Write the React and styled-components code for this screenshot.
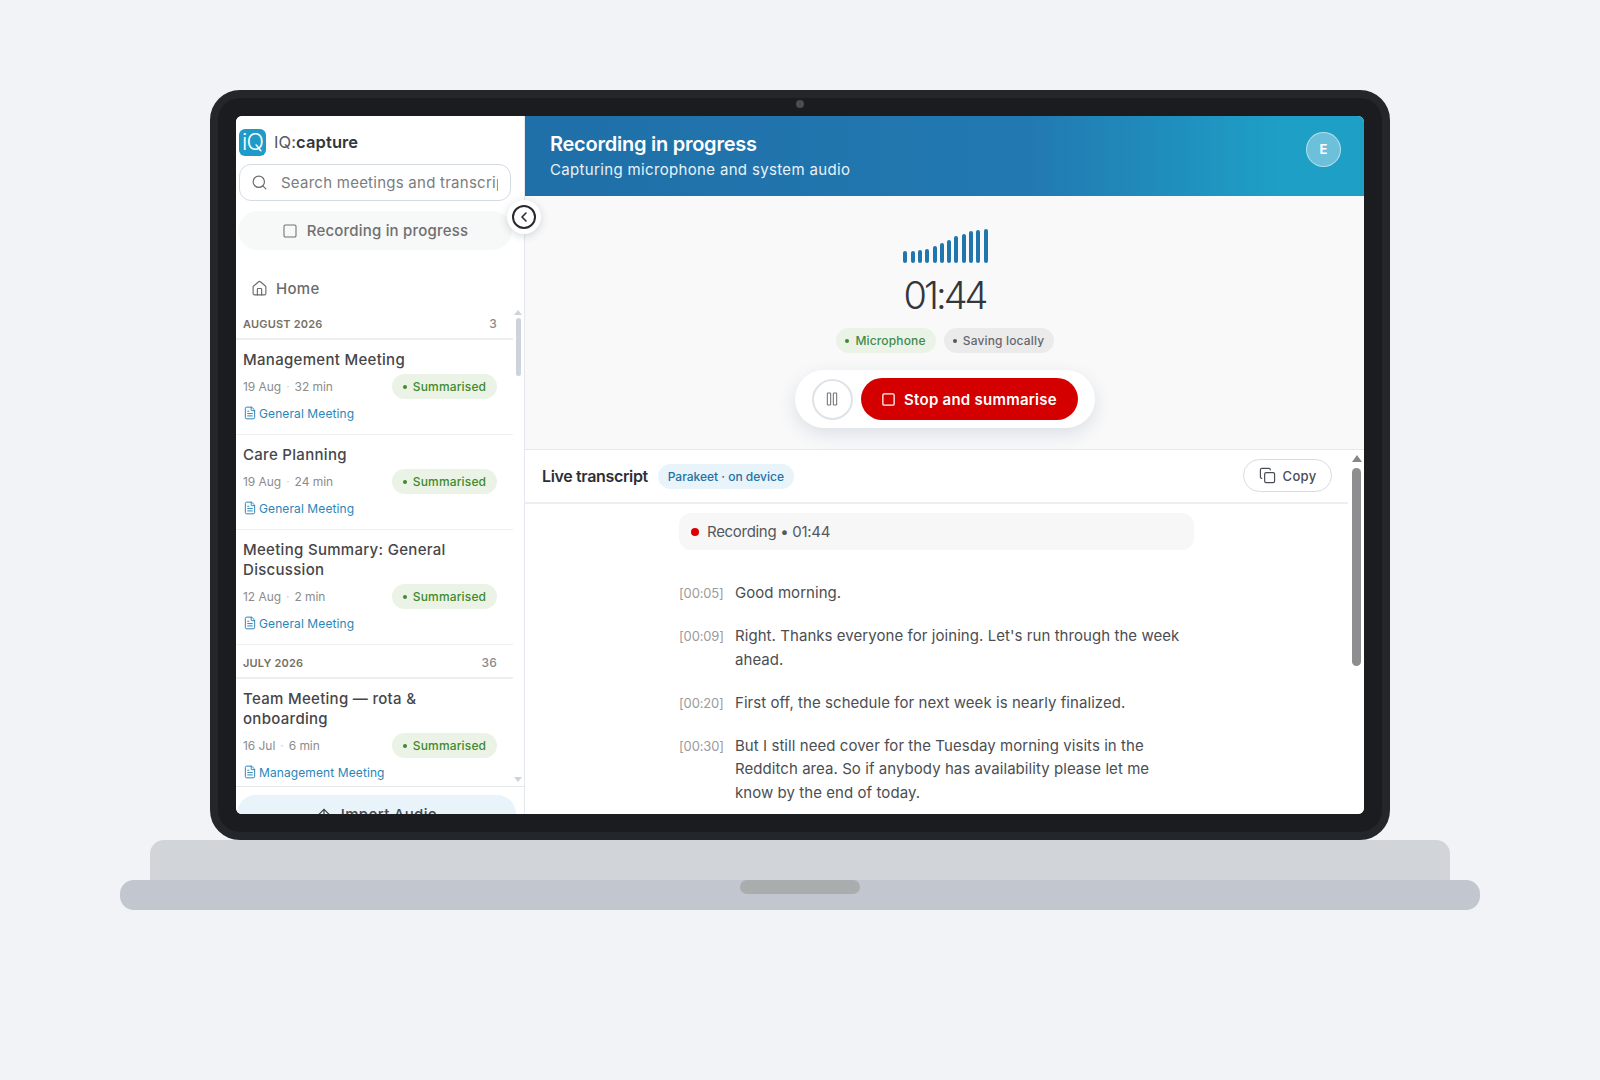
import React from 'react';
import styled, { createGlobalStyle } from 'styled-components';
import { Search, Square, House, FileText, ArrowUp, ChevronLeft, Copy, Pause } from 'lucide-react';

const Global = createGlobalStyle`
  html, body { margin: 0; padding: 0; background: #f1f3f7; }
  * { box-sizing: border-box; }
  body { font-family: Inter, "Noto Sans", sans-serif; }
`;

const Page = styled.div`
  width: 1600px; height: 1080px; padding-top: 90px; overflow: hidden;
  display: flex; flex-direction: column; align-items: center;
`;
const Lid = styled.div`
  position: relative; width: 1180px; height: 750px; padding: 18px;
  background: #1a1c20; border: 8px solid #23272c; border-radius: 30px;
`;
const Camera = styled.div`
  position: absolute; top: 2px; left: 50%; margin-left: -4px; width: 8px; height: 8px;
  border-radius: 50%; background: #4a4d52;
`;
const Screen = styled.div`
  position: relative; width: 1128px; height: 698px; display: flex; background: #fff;
  border-radius: 6px; overflow: hidden;
`;
const Hinge = styled.div`
  width: 1300px; height: 40px; background: #d1d5d9; border-radius: 14px 14px 0 0;
`;
const Base = styled.div`
  width: 1360px; height: 30px; background: #c2c6ce; border-radius: 14px;
  display: flex; justify-content: center;
`;
const Notch = styled.div`
  width: 120px; height: 14px; background: #a9adad; border-radius: 8px;
`;

const Sidebar = styled.aside`
  width: 289px; height: 698px; flex: none; display: flex; flex-direction: column;
  border-right: 1px solid #e4e8ec; overflow: hidden; background: #fff;
`;
const Brand = styled.div`
  height: 48px; flex: none; padding: 13px 0 0 3px; display: flex; align-items: flex-start; gap: 8px;
`;
const Logo = styled.div`
  width: 27px; height: 27px; border-radius: 6px; background: #1f9bc8; color: #fff;
  font-size: 23px; font-weight: 300; line-height: 26px; text-align: center; letter-spacing: -1px;
`;
const BrandName = styled.div`
  font-size: 16.5px; line-height: 27px; color: #55585c; font-weight: 400; letter-spacing: 0.1px;
  b { font-weight: 600; color: #33363a; }
`;
const SearchBox = styled.div`
  margin-left: 3px; width: 272px; height: 37px; flex: none; border: 1px solid #d4dae2; border-radius: 12px;
  display: flex; align-items: center; padding-left: 11px; gap: 13px; overflow: hidden;
  color: #6a6d70;
`;
const SearchText = styled.div`
  font-size: 15px; color: #7a7d80; white-space: nowrap; overflow: hidden; width: 217px; letter-spacing: 0.25px;
`;
const RecordingButton = styled.div`
  margin: 10px 0 0 2px; width: 274px; height: 39px; flex: none; border-radius: 20px; background: #f7f8f8;
  display: flex; align-items: center; justify-content: center; gap: 9px; color: #707070;
  font-size: 15px; font-weight: 500; letter-spacing: 0.2px;
`;
const HomeRow = styled.div`
  margin-top: 20px; height: 36px; flex: none; padding-left: 15px; display: flex; align-items: center; gap: 8px;
  font-size: 15px; font-weight: 500; color: #6b6b6b; letter-spacing: 0.3px;
`;
const ListArea = styled.div`
  height: 480px; flex: none; display: flex;
`;
const List = styled.div`
  width: 277px; height: 480px; overflow: hidden; flex: none;
`;
const MiniScroll = styled.div`
  margin-left: 3px; width: 4px; height: 480px; display: flex; flex-direction: column; align-items: center;
  justify-content: space-between; padding: 4px 0;
`;
const Track = styled.div`
  flex: 1; width: 100%; margin-top: 3px;
`;
const MiniThumb = styled.div`
  width: 5px; height: 58px; border-radius: 3px; background: #ccd3db;
`;
const Arrow = styled.div`
  width: 0; height: 0; border-left: ${p => p.$s || 4}px solid transparent; border-right: ${p => p.$s || 4}px solid transparent;
  ${p => p.$down ? `border-top: 5px solid ${p.$c};` : `border-bottom: ${p.$s ? p.$s + 2 : 5}px solid ${p.$c};`}
`;
const SectionHead = styled.div`
  height: 34px; padding: 9px 16px 0 7px; display: flex; justify-content: space-between; align-items: flex-start;
  border-bottom: 2px solid #eeeeee; font-size: 11px; line-height: 18px; font-weight: 600; color: #777063;
  letter-spacing: 0.2px;
`;
const Count = styled.span`
  font-size: 12px; font-weight: 500; color: #8a8a8a; letter-spacing: 0.2px;
`;
const Item = styled.div`
  padding: 10px 16px 12px 7px; border-bottom: 1px solid ${p => p.$last ? 'transparent' : '#eeeeee'};
`;
const ItemTitle = styled.div`
  font-size: 15px; line-height: 20px; font-weight: 500; color: #46464a; letter-spacing: 0.3px;
  margin-bottom: ${p => p.$extra ? 1 : 0}px;
`;
const MetaRow = styled.div`
  margin-top: 4px; height: 25px; display: flex; align-items: center; justify-content: space-between;
`;
const Meta = styled.div`
  font-size: 12px; color: #8c8c8c; display: flex; gap: 5px; white-space: nowrap; letter-spacing: -0.05px;
  i { font-style: normal; color: #cfcfcf; }
`;
const Chip = styled.div`
  display: inline-flex; align-items: center; justify-content: center; height: 25px; border-radius: 13px;
  background: ${p => p.$bg}; color: ${p => p.$fg}; font-size: 12px; font-weight: 500; gap: 6px;
  width: ${p => p.$w}px; white-space: nowrap; letter-spacing: 0.15px;
`;
const Dot = styled.span`
  width: 4px; height: 4px; border-radius: 50%; background: ${p => p.$c}; flex: none;
`;
const LinkRow = styled.div`
  margin-top: 5px; height: 18px; display: flex; align-items: center; gap: 2px;
  font-size: 12px; color: #2a86b8; letter-spacing: 0.1px;
`;
const Footer = styled.div`
  border-top: 1px solid #e6e9ec; padding: 8px 7px 0 1px; flex: none;
`;
const ImportButton = styled.div`
  width: 279px; height: 38px; border-radius: 20px; background: #e8f3fa; color: #4a4a4e;
  display: flex; align-items: center; justify-content: center; gap: 9px; font-size: 15px; font-weight: 500;
  letter-spacing: 0.3px;
`;
const Collapse = styled.div`
  position: absolute; left: 271px; top: 84px; width: 34px; height: 34px; border-radius: 50%;
  background: #fff; box-shadow: 0 2px 8px rgba(30,50,70,.18); display: flex; align-items: center; justify-content: center;
  z-index: 2;
`;
const CollapseRing = styled.div`
  width: 24px; height: 24px; border-radius: 50%; border: 2px solid #2a2a2e; color: #2a2a2e;
  display: flex; align-items: center; justify-content: center;
`;

const Main = styled.main`
  flex: 1; min-width: 0; display: flex; flex-direction: column; height: 698px;
`;
const Banner = styled.header`
  height: 80px; flex: none; padding: 0 23px 0 25px; display: flex; align-items: center; justify-content: space-between;
  background: linear-gradient(90deg, #1f6fa8 0%, #2279b1 60%, #1e9fc6 90%, #1e9fc6 100%); color: #fff;
`;
const BannerTitle = styled.div`
  font-size: 20px; line-height: 26px; font-weight: 600; letter-spacing: -0.25px; margin-top: -1px;
`;
const BannerSub = styled.div`
  font-size: 15px; line-height: 22px; color: #e8f2f8; letter-spacing: 0.34px; margin-top: 2px;
`;
const Avatar = styled.div`
  width: 35px; height: 35px; border-radius: 50%; background: rgba(255,255,255,.35);
  border: 1px solid rgba(255,255,255,.5); display: flex; align-items: center; justify-content: center;
  font-size: 13px; font-weight: 700; margin-top: -14px;
`;
const RecorderPanel = styled.section`
  height: 254px; flex: none; background: #f9f9fa; border-bottom: 1px solid #e6e8ea;
  display: flex; flex-direction: column; align-items: center; padding: 32px 0 0 0;
`;
const Bars = styled.div`
  height: 35px; display: flex; align-items: flex-end; gap: 3.33px; flex: none; padding-left: 2px;
`;
const Bar = styled.div`
  width: 4px; height: ${p => p.$h}px; border-radius: 2px; background: #2276ae;
`;
const Timer = styled.div`
  margin-top: 8px; font-size: 38px; line-height: 48px; font-weight: 300; color: #33363a; letter-spacing: -3px;
`;
const ChipRow = styled.div`
  margin-top: 9px; display: flex; gap: 8px;
`;
const Controls = styled.div`
  margin-top: 17px; width: 300px; height: 58px; border-radius: 29px; background: #fff;
  box-shadow: 0 6px 18px rgba(40,70,100,.14); display: flex; align-items: center; padding: 0 17px; gap: 8px;
`;
const PauseButton = styled.div`
  width: 41px; height: 41px; border-radius: 50%; border: 2px solid #dde3e8; color: #707478;
  display: flex; align-items: center; justify-content: center; flex: none;
`;
const StopButton = styled.div`
  width: 218px; height: 42px; border-radius: 21px; background: #d40000; color: #fff;
  display: flex; align-items: center; justify-content: center; gap: 8px; font-size: 15px; font-weight: 600;
  letter-spacing: 0.25px;
`;
const TranscriptArea = styled.section`
  flex: 1; min-height: 0; display: flex; background: #fff;
`;
const TranscriptMain = styled.div`
  width: 823px; flex: none; display: flex; flex-direction: column;
`;
const TranscriptHead = styled.div`
  height: 54px; flex: none; border-bottom: 2px solid #eceef0; padding: 0 16px 0 17px; display: flex; align-items: center; gap: 10px;
`;
const HeadTitle = styled.div`
  font-size: 16px; font-weight: 600; color: #2c3036; white-space: nowrap; letter-spacing: -0.35px;
`;
const EngineChip = styled.div`
  height: 25px; width: 136px; border-radius: 13px; background: #e8f3fa; color: #2272a4; font-size: 12px; font-weight: 500;
  display: flex; align-items: center; justify-content: center; letter-spacing: 0; white-space: nowrap;
`;
const CopyButton = styled.div`
  margin-left: auto; margin-top: -1px; width: 89px; height: 33px; border-radius: 17px; border: 1px solid #d5dce2;
  display: flex; align-items: center; justify-content: center; gap: 7px; font-size: 13px; font-weight: 500; color: #4a4e54;
  letter-spacing: 0.3px;
`;
const TranscriptBody = styled.div`
  padding: 9px 0 0 154px; overflow: hidden; flex: 1; min-height: 0;
`;
const StatusBar = styled.div`
  width: 515px; height: 37px; border-radius: 12px; background: #f7f7f7; padding-left: 12px;
  display: flex; align-items: center; gap: 8px; font-size: 15px; color: #55585c; letter-spacing: -0.3px;
`;
const RedDot = styled.span`
  width: 8px; height: 8px; border-radius: 50%; background: #dd0000;
`;
const Lines = styled.div`
  margin-top: 31px; width: 505px; display: flex; flex-direction: column; gap: 19.5px;
`;
const Line = styled.div`
  display: grid; grid-template-columns: 56px 1fr; align-items: baseline;
`;
const Stamp = styled.span`
  font-size: 13px; color: #9b9b9b; letter-spacing: -0.15px;
`;
const Words = styled.span`
  font-size: 15px; line-height: 23.5px; color: #4b4e52; letter-spacing: 0.06px;
`;
const BigScroll = styled.div`
  width: 9px; margin-left: 4px; flex: none; display: flex; flex-direction: column; align-items: center; padding-top: 5px;
`;
const BigThumb = styled.div`
  margin-top: 6px; width: 9px; height: 198px; border-radius: 5px; background: #8e8e90;
`;

const items1 = [
  { t: 'Management Meeting', d: '19 Aug', m: '32 min', l: 'General Meeting' },
  { t: 'Care Planning', d: '19 Aug', m: '24 min', l: 'General Meeting' },
  { t: 'Meeting Summary: General Discussion', d: '12 Aug', m: '2 min', l: 'General Meeting', extra: true },
];
const items2 = [
  { t: 'Team Meeting — rota & onboarding', d: '16 Jul', m: '6 min', l: 'Management Meeting', last: true },
];
const bars = [12, 12, 13, 14, 17, 20, 23, 27, 29, 32, 33, 34];
const lines = [
  ['[00:05]', 'Good morning.'],
  ['[00:09]', "Right. Thanks everyone for joining. Let's run through the week ahead."],
  ['[00:20]', 'First off, the schedule for next week is nearly finalized.'],
  ['[00:30]', 'But I still need cover for the Tuesday morning visits in the Redditch area. So if anybody has availability please let me know by the end of today.'],
];

function Meeting({ t, d, m, l, last, extra }) {
  return (
    <Item $last={last}>
      <ItemTitle $extra={extra}>{t}</ItemTitle>
      <MetaRow>
        <Meta>{d}<i>·</i>{m}</Meta>
        <Chip $bg="#ebf3e6" $fg="#3f8a2e" $w={105}><Dot $c="#3f8a2e" />Summarised</Chip>
      </MetaRow>
      <LinkRow><FileText size={14} strokeWidth={1.7} />{l}</LinkRow>
    </Item>
  );
}

export default function App() {
  return (
    <Page>
      <Global />
      <Lid>
        <Camera />
        <Screen>
          <Sidebar>
            <Brand>
              <Logo>iQ</Logo>
              <BrandName>IQ:<b>capture</b></BrandName>
            </Brand>
            <SearchBox>
              <Search size={17} strokeWidth={1.7} />
              <SearchText>Search meetings and transcripts</SearchText>
            </SearchBox>
            <RecordingButton><Square size={16} strokeWidth={1.6} />Recording in progress</RecordingButton>
            <HomeRow><House size={17} strokeWidth={1.6} />Home</HomeRow>
            <ListArea>
              <List>
                <SectionHead>AUGUST 2026<Count>3</Count></SectionHead>
                {items1.map(i => <Meeting key={i.t} {...i} />)}
                <SectionHead>JULY 2026<Count>36</Count></SectionHead>
                {items2.map(i => <Meeting key={i.t} {...i} />)}
              </List>
              <MiniScroll>
                <Arrow $c="#d0d4d8" />
                <Track><MiniThumb /></Track>
                <Arrow $down $c="#d0d4d8" />
              </MiniScroll>
            </ListArea>
            <Footer>
              <ImportButton><ArrowUp size={16} strokeWidth={1.9} />Import Audio</ImportButton>
            </Footer>
          </Sidebar>
          <Collapse><CollapseRing><ChevronLeft size={16} strokeWidth={2.4} /></CollapseRing></Collapse>
          <Main>
            <Banner>
              <div>
                <BannerTitle>Recording in progress</BannerTitle>
                <BannerSub>Capturing microphone and system audio</BannerSub>
              </div>
              <Avatar>E</Avatar>
            </Banner>
            <RecorderPanel>
              <Bars>{bars.map((h, i) => <Bar key={i} $h={h} />)}</Bars>
              <Timer>01:44</Timer>
              <ChipRow>
                <Chip $bg="#ebf3e6" $fg="#3f8a4e" $w={100}><Dot $c="#3f8a2e" />Microphone</Chip>
                <Chip $bg="#ebebec" $fg="#66686c" $w={110}><Dot $c="#55585c" />Saving locally</Chip>
              </ChipRow>
              <Controls>
                <PauseButton><Pause size={16} strokeWidth={1.6} /></PauseButton>
                <StopButton><Square size={15} strokeWidth={2} />Stop and summarise</StopButton>
              </Controls>
            </RecorderPanel>
            <TranscriptArea>
              <TranscriptMain>
                <TranscriptHead>
                  <HeadTitle>Live transcript</HeadTitle>
                  <EngineChip>Parakeet · on device</EngineChip>
                  <CopyButton><Copy size={17} strokeWidth={1.7} />Copy</CopyButton>
                </TranscriptHead>
                <TranscriptBody>
                  <StatusBar><RedDot />Recording • 01:44</StatusBar>
                  <Lines>
                    {lines.map(([s, w]) => (
                      <Line key={s}><Stamp>{s}</Stamp><Words>{w}</Words></Line>
                    ))}
                  </Lines>
                </TranscriptBody>
              </TranscriptMain>
              <BigScroll>
                <Arrow $s={5} $c="#85878a" />
                <BigThumb />
              </BigScroll>
            </TranscriptArea>
          </Main>
        </Screen>
      </Lid>
      <Hinge />
      <Base><Notch /></Base>
    </Page>
  );
}
